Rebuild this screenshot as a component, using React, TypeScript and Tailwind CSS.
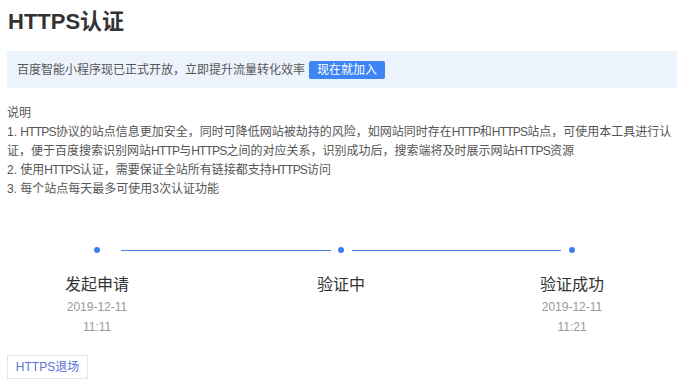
import React from "react";

const FONT = { fontFamily: '"Liberation Sans", "Noto Sans CJK SC", sans-serif' };

function L({ children }: { children: React.ReactNode }) {
  return <span className="tracking-[-0.8px]">{children}</span>;
}

export default function App() {
  return (
    <div className="w-[677px] h-[388px] bg-white overflow-hidden" style={FONT}>
      <div className="pl-[8px] pt-[7px] h-[30px] leading-[30px] text-[22px] font-bold text-[#333]">
        HTTPS认证
      </div>
      <div className="ml-[7px] mt-[21px] h-[37px] bg-[#edf3fd] flex items-center pl-[10px] text-[12px] text-[#555]">
        <span>百度智能小程序现已正式开放，立即提升流量转化效率</span>
        <button className="ml-[4px] h-[18px] px-[8px] rounded-[2px] bg-[#3d85f5] text-white text-[12px] leading-[18px]">
          现在就加入
        </button>
      </div>
      <div className="ml-[7px] mt-[16px] text-[12px] leading-[19px] text-[#555] whitespace-nowrap">
        <div>说明</div>
        <div>
          1. <L>HTTPS</L>协议的站点信息更加安全，同时可降低网站被劫持的风险，如网站同时存在<L>HTTP</L>和<L>HTTPS</L>站点，可使用本工具进行认
        </div>
        <div>
          证，便于百度搜索识别网站<L>HTTP</L>与<L>HTTPS</L>之间的对应关系，识别成功后，搜索端将及时展示网站<L>HTTPS</L>资源
        </div>
        <div>
          2. 使用<L>HTTPS</L>认证，需要保证全站所有链接都支持<L>HTTPS</L>访问
        </div>
        <div>3. 每个站点每天最多可使用3次认证功能</div>
      </div>
      <div className="mt-[48px] h-[6px] flex items-center">
        <div className="ml-[94px] w-[6px] h-[6px] rounded-full bg-[#3b7ff0]" />
        <div className="ml-[21px] w-[210px] h-px bg-[#4a84e8]" />
        <div className="ml-[7px] w-[6px] h-[6px] rounded-full bg-[#3b7ff0]" />
        <div className="ml-[8px] w-[209px] h-px bg-[#4a84e8]" />
        <div className="ml-[8px] w-[6px] h-[6px] rounded-full bg-[#3b7ff0]" />
      </div>
      <div className="mt-[20px] flex">
        <div className="w-[194px] text-center">
          <div className="text-[16px] leading-[24px] text-[#333]">发起申请</div>
          <div className="text-[12px] leading-[20px] text-[#999]">2019-12-11</div>
          <div className="text-[12px] leading-[20px] text-[#999]">11:11</div>
        </div>
        <div className="w-[294px] text-center">
          <div className="text-[16px] leading-[24px] text-[#333]">验证中</div>
        </div>
        <div className="w-[168px] text-center">
          <div className="text-[16px] leading-[24px] text-[#333]">验证成功</div>
          <div className="text-[12px] leading-[20px] text-[#999]">2019-12-11</div>
          <div className="text-[12px] leading-[20px] text-[#999]">11:21</div>
        </div>
      </div>
      <div className="ml-[7px] mt-[17px]">
        <button className="h-[24px] w-[81px] border border-[#e3e6ee] text-[12px] text-[#5b72d8] leading-[22px]">
          HTTPS退场
        </button>
      </div>
    </div>
  );
}
